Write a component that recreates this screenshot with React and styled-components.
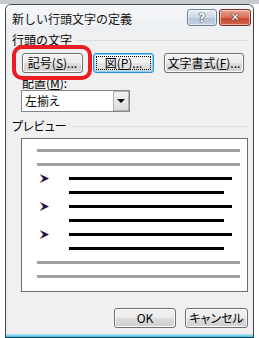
import React from 'react'
import styled, { createGlobalStyle } from 'styled-components'

const GlobalStyle = createGlobalStyle`
  html, body {
    margin: 0;
    padding: 0;
    background: #fff;
  }
  body {
    width: 259px;
    height: 338px;
    overflow: hidden;
    font-family: "Noto Sans CJK JP", "Liberation Sans", sans-serif;
    font-size: 12px;
    color: #000;
  }
`

function Arrow() {
    return (
        <svg width="9" height="9" viewBox="0 0 9 9">
            <polygon points="0,0 9,4.5 0,9 3,4.5" fill="#14145a" />
            <polyline points="0,0 3,4.5 0,9" fill="none" stroke="#e08a1e" strokeWidth="1" />
        </svg>
    )
}

function App() {
    return (
        <Screen>
            <GlobalStyle />
            <Window>
                {/* Title bar */}
                <TitleBar>
                    <TitleText>新しい行頭文字の定義</TitleText>
                    <CaptionBtn $kind="help">?</CaptionBtn>
                    <CaptionBtn $kind="close">✕</CaptionBtn>
                </TitleBar>

                <Client>
                    <GroupHeader><span>行頭の文字</span></GroupHeader>
                    <ButtonRow>
                        <Btn $w={61}>記号(<u>S</u>)...</Btn>
                        <Btn $w={61} $focus>図(<u>P</u>)...</Btn>
                        <Btn $w={80}>文字書式(<u>F</u>)...</Btn>
                    </ButtonRow>

                    <FieldLabel>配置(<u>M</u>):</FieldLabel>
                    <Select>
                        <SelectText>左揃え</SelectText>
                        <SelectArrow />
                    </Select>

                    <GroupHeader $gap={7}><span>プレビュー</span></GroupHeader>
                    <Preview>
                        <PLine $w={203} $c="#a0a0a0" />
                        <PLine $w={203} $c="#a0a0a0" />
                        <BulletRow><Arrow /><PLine $w={163} /></BulletRow>
                        <PLine $w={155} $indent={32} />
                        <BulletRow><Arrow /><PLine $w={163} /></BulletRow>
                        <PLine $w={155} $indent={32} />
                        <BulletRow><Arrow /><PLine $w={163} /></BulletRow>
                        <PLine $w={155} $indent={32} />
                        <PLine $w={203} $c="#a0a0a0" />
                        <PLine $w={203} $c="#a0a0a0" />
                    </Preview>

                    <Footer>
                        <Btn $w={62}>OK</Btn>
                        <Btn $w={63}>キャンセル</Btn>
                    </Footer>
                </Client>
                <BottomFrame />
            </Window>
            {/* red annotation ring */}
            <Highlight />
        </Screen>
    )
}

export default App

const Screen = styled.div`
    position: relative;
    width: 259px;
    height: 338px;
    padding-top: 4px;
    box-sizing: border-box;
    background: linear-gradient(#c4c8cd 0, #c9ccd0 4px, #fff 4px);
`

const Window = styled.div`
    margin-left: 5px;
    width: 249px;
    height: 334px;
    box-sizing: border-box;
    border: 1px solid #3f4650;
    border-bottom-color: #1d3b52;
    border-radius: 6px 6px 0 0;
    background: #e9edf1;
    display: flex;
    flex-direction: column;
    overflow: hidden;
`

const TitleBar = styled.div`
    height: 25px;
    flex: none;
    display: flex;
    align-items: flex-start;
    background: linear-gradient(#f6f7f9, #eceff2);
`

const TitleText = styled.div`
    flex: 1;
    padding: 6px 0 0 6px;
    line-height: 16px;
    font-size: 12px;
    color: #111;
`

const CaptionBtn = styled.div`
    width: ${p => (p.$kind === 'close' ? 32 : 30)}px;
    height: 17px;
    margin-top: 4px;
    margin-right: 2px;
    box-sizing: border-box;
    border-radius: 3px;
    display: flex;
    align-items: center;
    justify-content: center;
    font-family: "DejaVu Sans", sans-serif;
    font-weight: bold;
    font-size: ${p => (p.$kind === 'close' ? 11 : 12)}px;
    color: #fff;
    text-shadow: 0 0 1px #333, 0 0 1px #333, 0 0 1px #333;
    border: 1px solid ${p => (p.$kind === 'close' ? '#7b2c20' : '#6f7f92')};
    background: ${p => (p.$kind === 'close'
        ? 'linear-gradient(#e8a393 0%, #d8705c 50%, #c4442e 51%, #d0644c 100%)'
        : 'linear-gradient(#e7eef6 0%, #cbd7e5 50%, #b3c4d8 51%, #c3d2e3 100%)')};
    box-shadow: inset 0 0 0 1px rgba(255,255,255,0.5);
`

const Client = styled.div`
    flex: 1;
    margin: 0 2px;
    background: #f0f0f0;
    display: flex;
    flex-direction: column;
    font-feature-settings: "palt";
`

const BottomFrame = styled.div`
    height: 3px;
    flex: none;
    background: linear-gradient(#bfe6f6, #43b9e6);
`

const GroupHeader = styled.div`
    display: flex;
    align-items: center;
    gap: 5px;
    height: 14px;
    margin: ${p => p.$gap || 3}px 3px 0 4px;
    line-height: 14px;
    span { font-feature-settings: ${p => (p.$gap ? '"palt"' : 'normal')}; }
    &::after {
        content: '';
        flex: 1;
        height: 1px;
        background: #d5dfe5;
    }
`

const ButtonRow = styled.div`
    display: flex;
    gap: 10px;
    margin: 6px 0 0 14px;
`

const Btn = styled.button`
    position: relative;
    box-sizing: border-box;
    width: ${p => p.$w}px;
    height: 20px;
    padding: 0;
    font-family: "Noto Sans CJK JP", sans-serif;
    font-size: 12px;
    line-height: 18px;
    color: #000;
    font-feature-settings: "palt";
    border: 1px solid ${p => (p.$focus ? '#2d8fd6' : '#707070')};
    border-radius: 3px;
    background: ${p => (p.$focus
        ? 'linear-gradient(#fafafa 0%, #f1f1f1 50%, #e4e4e4 50%, #dadada 100%)'
        : 'linear-gradient(#f2f2f2 0%, #ebebeb 50%, #dddddd 50%, #cfcfcf 100%)')};
    box-shadow: inset 0 0 0 1px ${p => (p.$focus ? '#7fd4f7' : '#fcfcfc')};
    u { text-underline-offset: 1px; }
    ${p => p.$focus && `
        &::after {
            content: '';
            position: absolute;
            inset: 2px;
            border: 1px dotted #000;
        }
    `}
`

const FieldLabel = styled.div`
    height: 13px;
    margin: 3px 0 0 14px;
    line-height: 13px;
    u { text-underline-offset: 1px; }
`

const Select = styled.div`
    box-sizing: border-box;
    width: 109px;
    height: 22px;
    margin: 1px 0 0 13px;
    display: flex;
    border: 1px solid #828790;
    background: #fff;
`

const SelectText = styled.span`
    flex: 1;
    padding-left: 3px;
    line-height: 20px;
`

const SelectArrow = styled.span`
    width: 16px;
    box-sizing: border-box;
    border: 1px solid #b0b0b0;
    background: linear-gradient(#f2f2f2, #dcdcdc);
    display: flex;
    align-items: center;
    justify-content: center;
    &::before {
        content: '';
        border-left: 4px solid transparent;
        border-right: 4px solid transparent;
        border-top: 4px solid #000;
    }
`

const Preview = styled.div`
    box-sizing: border-box;
    width: 227px;
    height: 154px;
    margin: 5px 0 0 13px;
    padding: 10px 0 0 15px;
    border: 1px solid #6d6d6d;
    background: #fff;
    display: flex;
    flex-direction: column;
    gap: 11px;
`

const PLine = styled.div`
    flex: none;
    width: ${p => p.$w}px;
    height: 3px;
    margin-left: ${p => p.$indent || 0}px;
    background: ${p => p.$c || '#000'};
`

const BulletRow = styled.div`
    flex: none;
    display: flex;
    align-items: center;
    height: 3px;
    padding-left: 3px;
    gap: 20px;
    svg { flex: none; }
`

const Footer = styled.div`
    display: flex;
    justify-content: flex-end;
    gap: 9px;
    margin-top: 16px;
    padding-right: 3px;
`

const Highlight = styled.div`
    position: absolute;
    left: 12px;
    top: 45px;
    width: 80px;
    height: 35px;
    box-sizing: border-box;
    border: 4px solid #ec1c24;
    border-radius: 10px;
    pointer-events: none;
`
